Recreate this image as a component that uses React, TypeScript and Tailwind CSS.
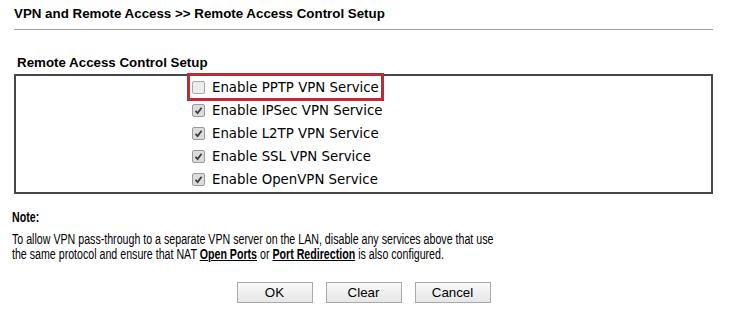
import React from 'react'

const services = [
  { label: 'Enable PPTP VPN Service', checked: false },
  { label: 'Enable IPSec VPN Service', checked: true },
  { label: 'Enable L2TP VPN Service', checked: true },
  { label: 'Enable SSL VPN Service', checked: true },
  { label: 'Enable OpenVPN Service', checked: true },
]

const Box: React.FC<{ checked: boolean }> = ({ checked }) => (
  <span
    className={`flex h-[13px] w-[13px] shrink-0 items-center justify-center rounded-[2px] border ${
      checked ? 'border-[#9a9a9a] bg-[#dcdcdc]' : 'border-[#a8a8a8] bg-[#ececec]'
    }`}
  >
    {checked && (
      <svg width="9" height="9" viewBox="0 0 9 9">
        <path d="M1.5 4.8 L3.6 7 L7.6 1.8" fill="none" stroke="#3c3c3c" strokeWidth="1.8" />
      </svg>
    )}
  </span>
)

const Btn: React.FC<{ label: string }> = ({ label }) => (
  <button className="h-[21px] w-[76px] border border-[#a9a9a9] bg-gradient-to-b from-[#f9f9f9] to-[#e6e6e6] font-['Liberation_Sans',Arial,sans-serif] text-[13.33px] text-black">
    {label}
  </button>
)

export default function App() {
  return (
    <div className="h-[332px] w-[732px] overflow-hidden bg-white text-black">
      <div className="pl-[14px] pt-[6px] font-['Liberation_Sans',Arial,sans-serif] text-[13.33px] font-bold leading-[16px]">
        VPN and Remote Access &gt;&gt; Remote Access Control Setup
      </div>
      <div className="ml-[14px] mt-[7px] h-px w-[699px] bg-[#a0a0a0]" />

      <div className="mt-[25px] pl-[17px] font-['Liberation_Sans',Arial,sans-serif] text-[13.33px] font-bold leading-[16px]">
        Remote Access Control Setup
      </div>

      <div className="relative ml-[14px] mt-[3px] h-[120px] w-[699px] border-2 border-[#474747]">
        <div className="flex flex-col pl-[176px] font-['DejaVu_Sans',Verdana,sans-serif] text-[13.33px]">
          {services.map((s) => (
            <div key={s.label} className="flex h-[23px] items-center gap-[7px]">
              <Box checked={s.checked} />
              <span className="leading-[16px]">{s.label}</span>
            </div>
          ))}
        </div>
        <div className="absolute left-[171px] top-[-3px] h-[28px] w-[197px] border-[3px] border-[#c12a35]" />
      </div>

      {/* narrow face is not installed, so squeeze Arial metrics to Arial Narrow width */}
      <div className="mt-[16px] pl-[12px] font-['Liberation_Sans',Arial,sans-serif] text-[14px] leading-[15px]">
        <div className="w-[700px] origin-left scale-x-[0.76] font-bold">Note:</div>
        <div className="mt-[7px] w-[700px] origin-left scale-x-[0.76] whitespace-nowrap">
          To allow VPN pass-through to a separate VPN server on the LAN, disable any services above that use
          <br />
          the same protocol and ensure that NAT <span className="font-bold underline">Open Ports</span> or{' '}
          <span className="font-bold underline">Port Redirection</span> is also configured.
        </div>
      </div>

      <div className="ml-[14px] mt-[20px] flex w-[699px] justify-center gap-[13px]">
        <Btn label="OK" />
        <Btn label="Clear" />
        <Btn label="Cancel" />
      </div>
    </div>
  )
}
